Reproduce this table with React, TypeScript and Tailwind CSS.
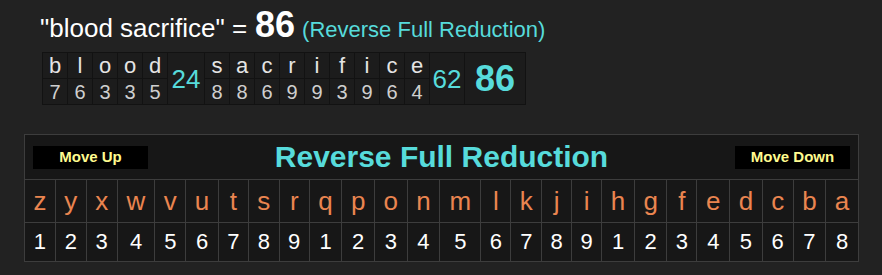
import React from "react";

const word1 = [
  ["b", 7], ["l", 6], ["o", 3], ["o", 3], ["d", 5],
] as const;
const word2 = [
  ["s", 8], ["a", 8], ["c", 6], ["r", 9], ["i", 9], ["f", 3], ["i", 9], ["c", 6], ["e", 4],
] as const;

const alphabet = "zyxwvutsrqponmlkjihgfedcba".split("");
const values = [1, 2, 3, 4, 5, 6, 7, 8, 9, 1, 2, 3, 4, 5, 6, 7, 8, 9, 1, 2, 3, 4, 5, 6, 7, 8];

function LetterCells({ word }: { word: readonly (readonly [string, number])[] }) {
  return (
    <>
      {word.map(([ch], i) => (
        <td key={i} className="w-[24px] h-[25px] p-0 text-center bg-[#1c1c1c] text-[#e4e4e4] text-[22px] leading-none">
          {ch}
        </td>
      ))}
    </>
  );
}

function NumberCells({ word }: { word: readonly (readonly [string, number])[] }) {
  return (
    <>
      {word.map(([, n], i) => (
        <td key={i} className="w-[24px] h-[25px] p-0 text-center bg-[#1c1c1c] text-[#cfcfcf] text-[20px] leading-none">
          {n}
        </td>
      ))}
    </>
  );
}

export default function App() {
  return (
    <div className="min-h-screen w-[882px] h-[275px] bg-[#222222] font-['Liberation_Sans',Arial,sans-serif] overflow-hidden">
      {/* ── Title line ── */}
      <div className="flex items-baseline pl-[40px] pt-[7px] h-[43px] leading-none">
        <span className="text-[26px] text-white">"blood sacrifice" =</span>
        <span className="ml-[8px] text-[36px] font-bold text-white">86</span>
        <span className="ml-[7px] text-[22px] text-[#57dbdb]">(Reverse Full Reduction)</span>
      </div>

      {/* ── Word breakdown ── */}
      <div className="pl-[42px] mt-[9px]">
        <table className="border-separate border-spacing-[1px] bg-[#121212]">
          <tbody>
            <tr>
              <LetterCells word={word1} />
              <td rowSpan={2} className="w-[36px] p-0 text-center bg-[#1c1c1c] text-[#57dbdb] text-[26px] leading-none">24</td>
              <LetterCells word={word2} />
              <td rowSpan={2} className="w-[34px] p-0 text-center bg-[#1c1c1c] text-[#57dbdb] text-[26px] leading-none">62</td>
              <td rowSpan={2} className="w-[60px] p-0 text-center bg-[#1c1c1c] text-[#57dbdb] text-[36px] font-bold leading-none">86</td>
            </tr>
            <tr>
              <NumberCells word={word1} />
              <NumberCells word={word2} />
            </tr>
          </tbody>
        </table>
      </div>

      {/* ── Cipher chart ── */}
      <div className="px-[24px] mt-[29px]">
        <table className="w-[835px] border-collapse bg-[#171717]">
          <tbody>
            <tr>
              <td colSpan={26} className="h-[45px] p-0 border border-[#3d3d3d]">
                <div className="flex items-center justify-between px-[8px]">
                  <button className="w-[115px] h-[23px] bg-black text-[#fffb8f] text-[15px] font-bold">
                    Move Up
                  </button>
                  <span className="text-[30px] font-bold text-[#57dbdb] leading-none">Reverse Full Reduction</span>
                  <button className="w-[115px] h-[23px] bg-black text-[#fffb8f] text-[15px] font-bold">
                    Move Down
                  </button>
                </div>
              </td>
            </tr>
            <tr>
              {alphabet.map((ch) => (
                <td key={ch} className="h-[43px] px-1.5 py-0 text-center border border-[#3d3d3d] text-[26px] text-[#ea8550] leading-none">
                  {ch}
                </td>
              ))}
            </tr>
            <tr>
              {values.map((n, i) => (
                <td key={i} className="h-[39px] px-1.5 py-0 text-center border border-[#3d3d3d] text-[22px] text-white leading-none">
                  {n}
                </td>
              ))}
            </tr>
          </tbody>
        </table>
      </div>
    </div>
  );
}
